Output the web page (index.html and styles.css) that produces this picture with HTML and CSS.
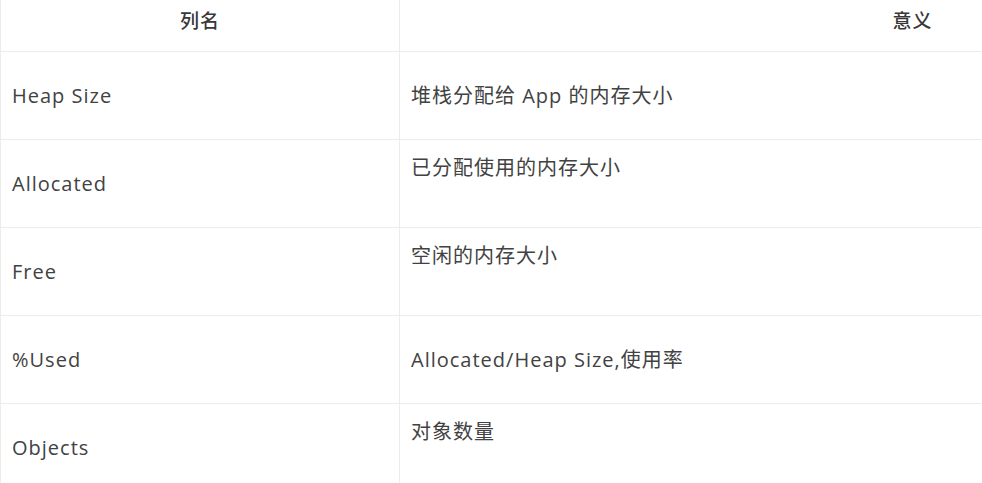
FILE: index.html
```html
<!DOCTYPE html>
<html lang="zh-CN">
<head>
<meta charset="utf-8">
<title>Heap</title>
<link rel="stylesheet" href="styles.css">
</head>
<body>
<div class="wrap">
<table class="grid">
  <thead>
    <tr><th class="c1">列名</th><th class="c2">意义</th></tr>
  </thead>
  <tbody>
    <tr><td class="c1">Heap Size</td><td class="c2">堆栈分配给 App 的内存大小</td></tr>
    <tr><td class="c1">Allocated</td><td class="c2">已分配使用的内存大小<br>&nbsp;</td></tr>
    <tr><td class="c1">Free</td><td class="c2">空闲的内存大小<br>&nbsp;</td></tr>
    <tr><td class="c1">%Used</td><td class="c2">Allocated/Heap Size,使用率</td></tr>
    <tr><td class="c1">Objects</td><td class="c2">对象数量<br>&nbsp;</td></tr>
  </tbody>
</table>
</div>
</body>
</html>
```
FILE: styles.css
```css
html, body {
  margin: 0;
  padding: 0;
  background: #ffffff;
}
.wrap {
  width: 982px;
  height: 483px;
  overflow: hidden;
}
.grid {
  border-collapse: collapse;
  table-layout: fixed;
  width: 1426px;
  font-family: "Open Sans", "Noto Sans CJK SC", sans-serif;
  font-size: 20px;
  letter-spacing: 1px;
  color: #424242;
}
.grid th, .grid td {
  border: 1px solid #ececec;
  padding: 0 11px;
  line-height: 33px;
  vertical-align: middle;
}
.grid thead th {
  border-top: none;
  height: 42px;
  padding-bottom: 9px;
  font-weight: 500;
  text-align: center;
  font-size: 19px;
  color: #383838;
}
.grid td {
  height: 87px;
  text-align: left;
}
.grid .c1 {
  width: 376px;
}
```
